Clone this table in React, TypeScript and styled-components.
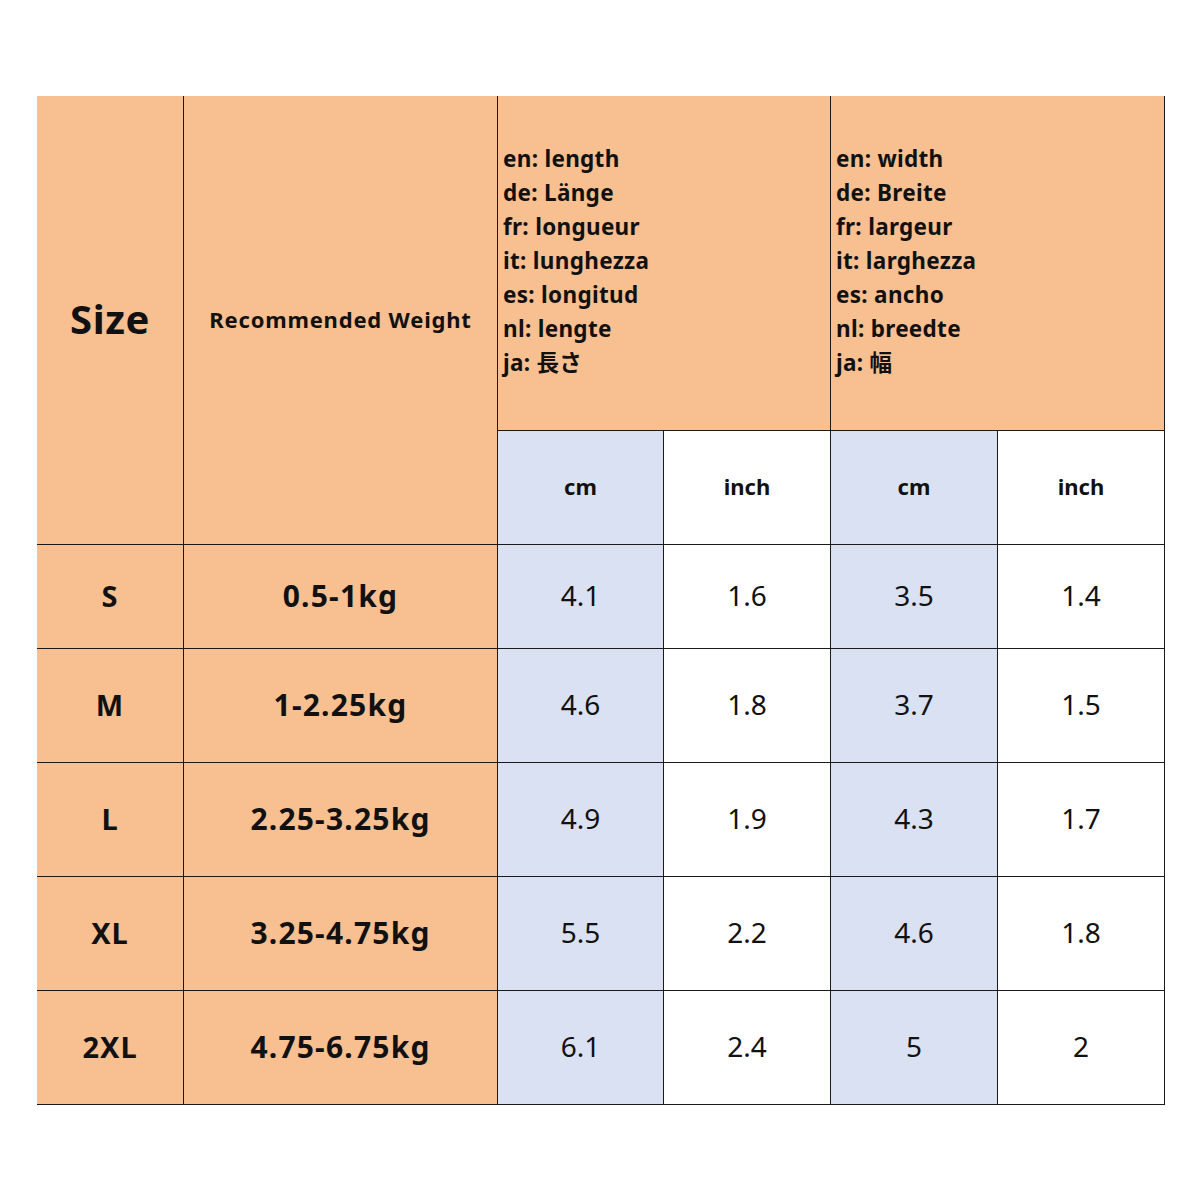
import React from "react";
import styled, { createGlobalStyle } from "styled-components";

const Global = createGlobalStyle`
  html, body { margin: 0; padding: 0; background: #ffffff; }
  body { font-family: "Noto Sans", "Noto Sans CJK JP", sans-serif; color: #111; }
`;

const Page = styled.div`
  width: 1200px;
  height: 1200px;
  padding: 96px 0 0 37px;
  box-sizing: border-box;
`;

const Grid = styled.div`
  display: grid;
  grid-template-columns: 146px 313px 165px 166px 166px 166px;
  grid-template-rows: 334px 113px 103px 113px 113px 113px 113px;
  gap: 1px;
  background: #1a1a1a;
  padding: 0 1px 1px 0;
  width: max-content;
`;

type Tone = "peach" | "blue" | "white";
const bg: Record<Tone, string> = { peach: "#f8bf91", blue: "#dae1f3", white: "#ffffff" };

const Cell = styled.div<{ $tone: Tone; $rowSpan?: number; $colSpan?: number }>`
  background: ${(p) => bg[p.$tone]};
  grid-row: ${(p) => (p.$rowSpan ? `span ${p.$rowSpan}` : "auto")};
  grid-column: ${(p) => (p.$colSpan ? `span ${p.$colSpan}` : "auto")};
  display: flex;
  align-items: center;
  justify-content: center;
  padding-bottom: 3px;
  box-sizing: border-box;
`;

const SizeTitle = styled.span`
  font-size: 40px;
  font-weight: 700;
  letter-spacing: 0.6px;
`;

const WeightTitle = styled.span`
  font-size: 22px;
  font-weight: 700;
  letter-spacing: 0.8px;
`;

const LangCell = styled(Cell)`
  justify-content: flex-start;
  padding-left: 5px;
  padding-bottom: 0;
`;

const LangList = styled.div`
  display: flex;
  flex-direction: column;
  font-size: 22.5px;
  font-weight: 700;
  line-height: 34px;
  letter-spacing: 0.3px;
  transform: translateY(-2px);
`;

const Unit = styled.span`
  font-size: 22px;
  font-weight: 700;
`;

const SizeLabel = styled.span`
  font-size: 29px;
  font-weight: 700;
  letter-spacing: 1px;
`;

const WeightValue = styled.span`
  font-size: 30px;
  font-weight: 700;
  letter-spacing: 1.2px;
`;

const Num = styled.span`
  font-size: 28px;
  font-weight: 400;
`;

const rows = [
  { s: "S", w: "0.5-1kg", v: ["4.1", "1.6", "3.5", "1.4"] },
  { s: "M", w: "1-2.25kg", v: ["4.6", "1.8", "3.7", "1.5"] },
  { s: "L", w: "2.25-3.25kg", v: ["4.9", "1.9", "4.3", "1.7"] },
  { s: "XL", w: "3.25-4.75kg", v: ["5.5", "2.2", "4.6", "1.8"] },
  { s: "2XL", w: "4.75-6.75kg", v: ["6.1", "2.4", "5", "2"] },
];

const length = ["en: length", "de: Länge", "fr: longueur", "it: lunghezza", "es: longitud", "nl: lengte", "ja: 長さ"];
const width = ["en: width", "de: Breite", "fr: largeur", "it: larghezza", "es: ancho", "nl: breedte", "ja: 幅"];

const tones: Tone[] = ["blue", "white", "blue", "white"];

export default function App() {
  return (
    <Page>
      <Global />
      <Grid>
        <Cell $tone="peach" $rowSpan={2}>
          <SizeTitle>Size</SizeTitle>
        </Cell>
        <Cell $tone="peach" $rowSpan={2}>
          <WeightTitle>Recommended Weight</WeightTitle>
        </Cell>
        <LangCell $tone="peach" $colSpan={2}>
          <LangList>
            {length.map((t) => (
              <span key={t}>{t}</span>
            ))}
          </LangList>
        </LangCell>
        <LangCell $tone="peach" $colSpan={2}>
          <LangList>
            {width.map((t) => (
              <span key={t}>{t}</span>
            ))}
          </LangList>
        </LangCell>
        {["cm", "inch", "cm", "inch"].map((u, i) => (
          <Cell key={i} $tone={tones[i]}>
            <Unit>{u}</Unit>
          </Cell>
        ))}
        {rows.map((r) => (
          <React.Fragment key={r.s}>
            <Cell $tone="peach">
              <SizeLabel>{r.s}</SizeLabel>
            </Cell>
            <Cell $tone="peach">
              <WeightValue>{r.w}</WeightValue>
            </Cell>
            {r.v.map((v, i) => (
              <Cell key={i} $tone={tones[i]}>
                <Num>{v}</Num>
              </Cell>
            ))}
          </React.Fragment>
        ))}
      </Grid>
    </Page>
  );
}
